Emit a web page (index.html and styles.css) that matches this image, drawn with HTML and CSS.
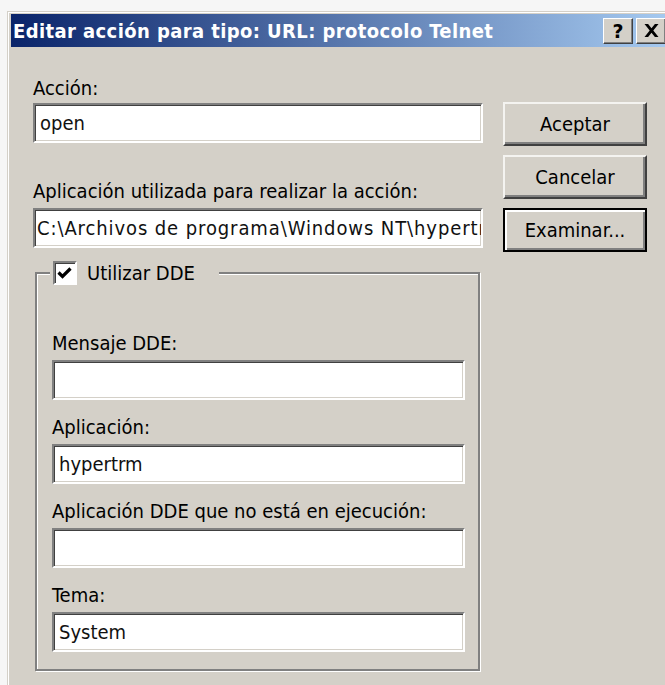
FILE: index.html
```html
<!DOCTYPE html>
<html lang="es">
<head>
<meta charset="utf-8">
<title>Editar acción para tipo</title>
<link rel="stylesheet" href="styles.css">
</head>
<body>
<div class="dialog">
  <div class="titlebar">
    <span class="title">Editar acción para tipo: URL: protocolo Telnet</span>
    <div class="caption-buttons">
      <button class="caption-btn caption-help" type="button">?</button>
      <button class="caption-btn" type="button" aria-label="Cerrar">
        <svg width="15" height="13" viewBox="0 0 15 13"><path d="M0.5 0h3.6l3.4 4.3 3.4-4.3h3.6l-5.2 6.5 5.2 6.5h-3.6l-3.4-4.3-3.4 4.3h-3.6l5.2-6.5z" fill="#000"/></svg>
      </button>
    </div>
  </div>
  <div class="content">
    <div class="main">
      <label class="field-label" for="accion">Acción:</label>
      <input class="field" id="accion" type="text" value="open">
      <label class="field-label label-app" for="app">Aplicación utilizada para realizar la acción:</label>
      <input class="field field-app" id="app" type="text" value="C:\Archivos de programa\Windows NT\hypertrm.exe">
      <fieldset class="group">
        <legend class="group-legend">
          <span class="check">
            <svg width="20" height="20" viewBox="0 0 20 20"><path d="M3.5 9.5l4 4 8-8" fill="none" stroke="#000" stroke-width="3.2"/></svg>
          </span>
          <span>Utilizar DDE</span>
        </legend>
        <div class="group-field">
          <label class="field-label">Mensaje DDE:</label>
          <input class="field field-inner" type="text" value="">
        </div>
        <div class="group-field">
          <label class="field-label">Aplicación:</label>
          <input class="field field-inner" type="text" value="hypertrm">
        </div>
        <div class="group-field">
          <label class="field-label">Aplicación DDE que no está en ejecución:</label>
          <input class="field field-inner" type="text" value="">
        </div>
        <div class="group-field">
          <label class="field-label">Tema:</label>
          <input class="field field-inner" type="text" value="System">
        </div>
      </fieldset>
    </div>
    <div class="actions">
      <button class="btn" type="button">Aceptar</button>
      <button class="btn" type="button">Cancelar</button>
      <button class="btn btn-default" type="button">Examinar...</button>
    </div>
  </div>
</div>
</body>
</html>
```

FILE: styles.css
```css
html, body {
  margin: 0;
  height: 100%;
  overflow: hidden;
}

body {
  background: #f6f6f6;
  font-family: "DejaVu Sans Condensed", "DejaVu Sans", sans-serif;
  font-stretch: condensed;
  font-size: 20px;
  color: #000;
}

/* window frame */
.dialog {
  box-sizing: border-box;
  width: 663px;
  height: 700px;
  margin: 11px 0 0 7px;
  padding: 2px 0 0 3px;
  background: #d4d0c8;
  border-top: 1px solid #d4d0c8;
  border-left: 1px solid #d4d0c8;
  box-shadow: inset 1px 1px 0 #fff;
}

.titlebar {
  display: flex;
  align-items: center;
  height: 33px;
  padding: 0 4px 0 2px;
  background: linear-gradient(to right, #0a246a, #a6caf0);
}

.title {
  flex: 1;
  color: #fff;
  font-weight: bold;
  letter-spacing: 0.4px;
  white-space: nowrap;
  overflow: hidden;
}

.caption-buttons {
  display: flex;
  gap: 3px;
}

.caption-btn {
  display: flex;
  align-items: center;
  justify-content: center;
  box-sizing: border-box;
  width: 30px;
  height: 26px;
  padding: 0;
  background: #d4d0c8;
  border: 1px solid;
  border-color: #fff #404040 #404040 #fff;
  box-shadow: inset -1px -1px 0 #808080;
  font: bold 19px "DejaVu Sans", sans-serif;
  color: #000;
}

/* dialog body */
.content {
  display: flex;
  gap: 20px;
  padding: 31px 0 0 22px;
}

.main {
  display: flex;
  flex-direction: column;
  width: 450px;
}

.field-label {
  display: block;
  height: 20px;
  line-height: 20px;
  white-space: nowrap;
}

.label-app {
  margin-top: 38px;
}

.field {
  box-sizing: border-box;
  height: 40px;
  margin: 5px 0 0;
  padding: 0 0 0 5px;
  background: #fff;
  border: 2px solid;
  border-color: #808080 #fff #fff #808080;
  box-shadow: inset 1px 1px 0 #404040, inset -1px -1px 0 #d4d0c8;
  font: inherit;
  color: #111;
  outline: none;
}

.field-app {
  margin-top: 7px;
  padding-left: 2px;
  letter-spacing: 0.9px;
}

/* DDE group box */
.group {
  box-sizing: border-box;
  width: 445px;
  min-width: 0;
  margin: 13px 0 0 2px;
  padding: 48px 13px 17px 15px;
  border: 2px solid #808080;
  box-shadow: inset 1px 1px 0 #fff, 1px 1px 0 #fff;
}

.group-legend {
  display: flex;
  align-items: center;
  gap: 10px;
  height: 24px;
  margin-left: -2px;
  padding: 0 24px 0 3px;
  background: #d4d0c8;
}

.check {
  display: flex;
  align-items: center;
  justify-content: center;
  box-sizing: border-box;
  width: 24px;
  height: 24px;
  background: #fff;
  border: 2px solid;
  border-color: #808080 #fff #fff #808080;
  box-shadow: inset 1px 1px 0 #404040;
}

.group-field {
  display: flex;
  flex-direction: column;
}

.group-field + .group-field {
  margin-top: 17px;
}

.field-inner {
  margin-top: 7px;
  width: 100%;
}

/* command buttons */
.actions {
  display: flex;
  flex-direction: column;
  gap: 9px;
  width: 144px;
  padding-top: 24px;
}

.btn {
  box-sizing: border-box;
  height: 44px;
  padding: 0;
  background: #d4d0c8;
  border: 2px solid;
  border-color: #f4f3f0 #404040 #404040 #f4f3f0;
  box-shadow: inset -2px -2px 0 #808080;
  font: inherit;
  color: #000;
}

.btn-default {
  border-color: #000;
  box-shadow: inset 2px 2px 0 #fff, inset -2px -2px 0 #808080;
}
```
